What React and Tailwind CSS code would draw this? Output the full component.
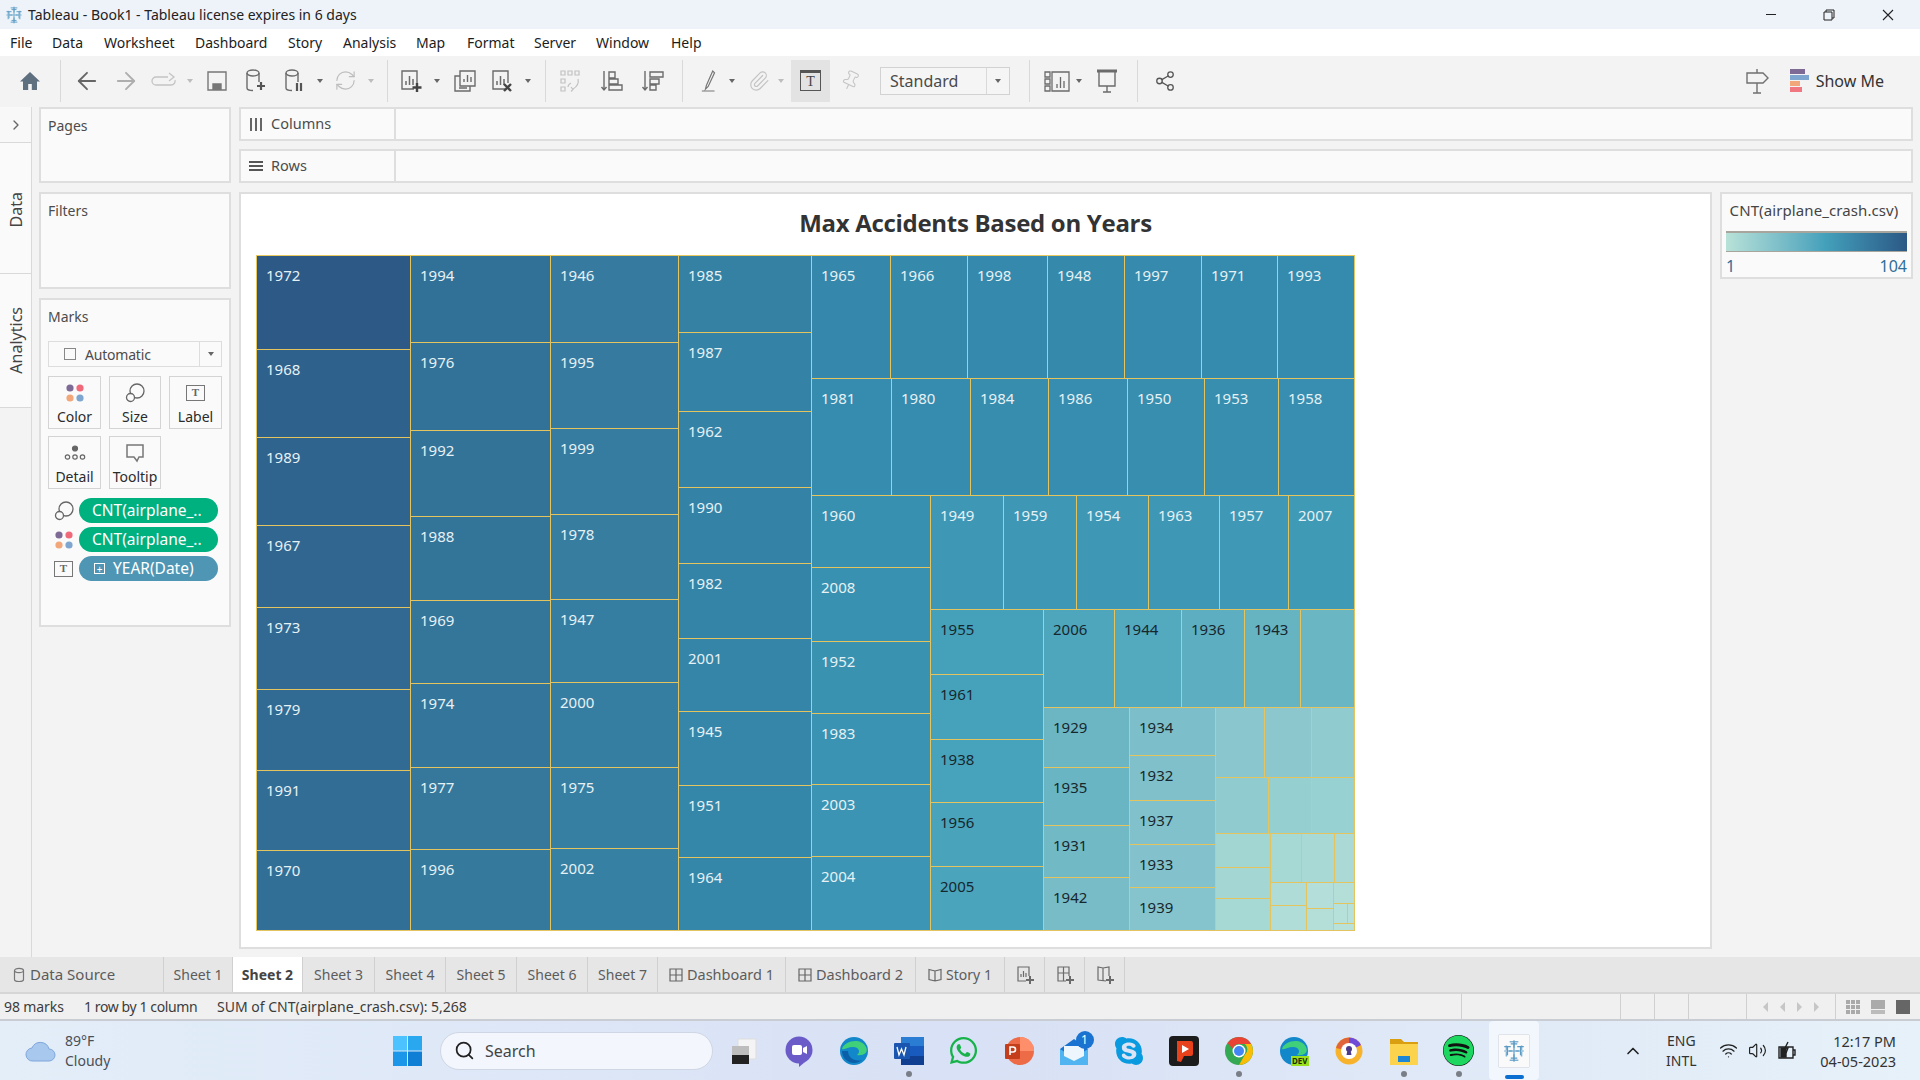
import React from 'react';
import { ArrowLeft, ArrowRight, RefreshCw, Paperclip, Pin, Share2, Wifi, Volume2, ChevronUp, Search, ChevronRight } from 'lucide-react';
import { FaWhatsapp, FaSkype, FaSpotify } from 'react-icons/fa';

const UI = "font-['Noto_Sans','Open_Sans',sans-serif]";
const LINE = 'border-r border-b border-[#e3c45e]';

// cell: [label, classes, dark text?]
const Cell = ({ year, className, dark }) => (
  <div className={`${LINE} ${className} overflow-hidden ${year ? 'pl-[9px] pt-[8px]' : ''} text-[15px] leading-[22px] ${dark ? 'text-[#17272e]' : 'text-[#e6f1f5]'}`}>{year}</div>
);

const Col = ({ className, cells, dark }) => (
  <div className={`flex flex-col ${className}`}>
    {cells.map(([year, c]) => <Cell key={year + c} year={year} className={c} dark={dark} />)}
  </div>
);

const Row = ({ className, cells, dark }) => (
  <div className={`flex ${className}`}>
    {cells.map(([year, c]) => <Cell key={year + c} year={year} className={c} dark={dark} />)}
  </div>
);

const Treemap = () => (
  <div className="flex w-[1099px] h-[676px] border-t border-l border-[#e9c95f]">
    <Col className="w-[154px]" cells={[
      ['1972', 'h-[94px] bg-[#2c5986]'], ['1968', 'h-[88px] bg-[#2e618c]'], ['1989', 'h-[88px] bg-[#2f648e]'], ['1967', 'h-[82px] bg-[#306690]'],
      ['1973', 'h-[82px] bg-[#316992]'], ['1979', 'h-[81px] bg-[#316b93]'], ['1991', 'h-[80px] bg-[#326d95]'], ['1970', 'flex-1 bg-[#326f96]'],
    ]} />
    <Col className="w-[140px]" cells={[
      ['1994', 'h-[87px] bg-[#327197]'], ['1976', 'h-[88px] bg-[#327298]'], ['1992', 'h-[86px] bg-[#337398]'], ['1988', 'h-[84px] bg-[#337499]'],
      ['1969', 'h-[83px] bg-[#34759a]'], ['1974', 'h-[84px] bg-[#34769b]'], ['1977', 'h-[82px] bg-[#35789c]'], ['1996', 'flex-1 bg-[#35799d]'],
    ]} />
    <Col className="w-[128px]" cells={[
      ['1946', 'h-[87px] bg-[#367b9f]'], ['1995', 'h-[86px] bg-[#367b9f]'], ['1999', 'h-[86px] bg-[#367ca0]'], ['1978', 'h-[85px] bg-[#367da0]'],
      ['1947', 'h-[83px] bg-[#367ea1]'], ['2000', 'h-[85px] bg-[#367ea1]'], ['1975', 'h-[81px] bg-[#367fa2]'], ['2002', 'flex-1 bg-[#3680a3]'],
    ]} />
    <Col className="w-[133px]" cells={[
      ['1985', 'h-[77px] bg-[#3481a4]'], ['1987', 'h-[79px] bg-[#3482a5]'], ['1962', 'h-[76px] bg-[#3483a6]'], ['1990', 'h-[76px] bg-[#3483a6]'],
      ['1982', 'h-[75px] bg-[#3484a7]'], ['2001', 'h-[73px] bg-[#3485a8]'], ['1945', 'h-[74px] bg-[#3586a9]'], ['1951', 'h-[72px] bg-[#3587a9]'], ['1964', 'flex-1 bg-[#3587aa]'],
    ]} />
    <div className="flex flex-col flex-1">
      <Row className="h-[123px]" cells={[
        ['1965', 'w-[79px] bg-[#3588ab]'], ['1966', 'w-[77px] bg-[#3589ab]'], ['1998', 'w-[80px] bg-[#3589ac]'], ['1948', 'w-[77px] bg-[#358aac]'],
        ['1997', 'w-[77px] bg-[#358aad]'], ['1971', 'w-[76px] bg-[#358bad]'], ['1993', 'flex-1 bg-[#358bad]'],
      ]} />
      <Row className="h-[117px]" cells={[
        ['1981', 'w-[80px] bg-[#368cae]'], ['1980', 'w-[79px] bg-[#368cae]'], ['1984', 'w-[78px] bg-[#368dae]'], ['1986', 'w-[79px] bg-[#378daf]'],
        ['1950', 'w-[77px] bg-[#378eaf]'], ['1953', 'w-[74px] bg-[#378eaf]'], ['1958', 'flex-1 bg-[#378eb0]'],
      ]} />
      <div className="flex flex-1">
        <Col className="w-[119px]" cells={[
          ['1960', 'h-[72px] bg-[#3890b1]'], ['2008', 'h-[74px] bg-[#3991b1]'], ['1952', 'h-[72px] bg-[#3a92b1]'], ['1983', 'h-[71px] bg-[#3a93b2]'],
          ['2003', 'h-[72px] bg-[#3b94b3]'], ['2004', 'flex-1 bg-[#3c95b4]'],
        ]} />
        <div className="flex flex-col flex-1">
          <Row className="h-[114px]" cells={[
            ['1949', 'w-[73px] bg-[#3d97b5]'], ['1959', 'w-[73px] bg-[#3d97b5]'], ['1954', 'w-[72px] bg-[#3e98b5]'], ['1963', 'w-[71px] bg-[#3e98b5]'],
            ['1957', 'w-[69px] bg-[#3f99b6]'], ['2007', 'flex-1 bg-[#3f9ab6]'],
          ]} />
          <div className="flex flex-1">
            <Col className="w-[113px]" dark cells={[
              ['1955', 'h-[65px] bg-[#45a1ba]'], ['1961', 'h-[65px] bg-[#46a2ba]'], ['1938', 'h-[63px] bg-[#47a3bb]'], ['1956', 'h-[64px] bg-[#48a3bb]'], ['2005', 'flex-1 bg-[#49a4bc]'],
            ]} />
            <div className="flex flex-col flex-1">
              <Row className="h-[98px]" dark cells={[
                ['2006', 'w-[71px] bg-[#4ea6bc]'], ['1944', 'w-[67px] bg-[#53a9be]'], ['1936', 'w-[63px] bg-[#5eaec1]'], ['1943', 'w-[56px] bg-[#66b3c2]'], ['', 'flex-1 bg-[#6bb6c3]'],
              ]} />
              <div className="flex flex-1">
                <Col className="w-[86px]" dark cells={[
                  ['1929', 'h-[60px] bg-[#6cb6c4]'], ['1935', 'h-[58px] bg-[#69b5c3]'], ['1931', 'h-[52px] bg-[#72b9c6]'], ['1942', 'flex-1 bg-[#78bcc8]'],
                ]} />
                <Col className="w-[86px]" dark cells={[
                  ['1934', 'h-[48px] bg-[#7cbfca]'], ['1932', 'h-[45px] bg-[#7fc0ca]'], ['1937', 'h-[44px] bg-[#81c1cb]'], ['1933', 'h-[43px] bg-[#83c2cc]'], ['1939', 'flex-1 bg-[#85c4cd]'],
                ]} />
                <div className="flex flex-col flex-1">
                  <Row className="h-[70px]" cells={[['', 'w-[49px] bg-[#8ac6cd]'], ['', 'w-[47px] bg-[#8cc7ce]'], ['', 'flex-1 bg-[#90cbcf]']]} />
                  <Row className="h-[56px]" cells={[['', 'w-[53px] bg-[#90cbcf]'], ['', 'w-[43px] bg-[#96cfd0]'], ['', 'flex-1 bg-[#98d1d1]']]} />
                  <div className="flex flex-1">
                    <Col className="w-[55px]" cells={[['', 'h-[34px] bg-[#a2d6d2]'], ['', 'h-[31px] bg-[#a4d7d3]'], ['', 'flex-1 bg-[#a6d8d4]']]} />
                    <div className="flex flex-col flex-1">
                      <Row className="h-[49px]" cells={[['', 'w-[31px] bg-[#a6d8d4]'], ['', 'w-[33px] bg-[#a8d9d5]'], ['', 'flex-1 bg-[#abdad6]']]} />
                      <div className="flex flex-1">
                        <Col className="w-[36px]" cells={[['', 'h-[23px] bg-[#b0dcd7]'], ['', 'flex-1 bg-[#b1ddd8]']]} />
                        <Col className="w-[27px]" cells={[['', 'h-[26px] bg-[#b3ded9]'], ['', 'flex-1 bg-[#b4dfd9]']]} />
                        <div className="flex flex-col flex-1">
                          <Cell year="" className="h-[21px] bg-[#b4dfd9]" />
                          <div className="flex h-[20px]">
                            <Cell year="" className="w-[14px] bg-[#b6e0da]" />
                            <Cell year="" className="flex-1 bg-[#b7e0da]" />
                          </div>
                          <Cell year="" className="flex-1 bg-[#b8e1da]" />
                        </div>
                      </div>
                    </div>
                  </div>
                </div>
              </div>
            </div>
          </div>
        </div>
      </div>
    </div>
  </div>
);

const TableauLogo = ({ size = 20 }) => (
  <svg width={size} height={size} viewBox="0 0 24 24" stroke="#5b9bc4" strokeWidth="1.4">
    <path d="M12 3v18M7.5 12h9M12 3M8 3.5h8M5 7v4M19 7v4M5 13v4M19 13v4M8 20.5h8" stroke="#7fb2d2" />
    <path d="M12 2v7M9 5.5h6M12 15v7M9 18.5h6M3 12h7M14 12h7M6 8v8M18 8v8M3 8h6M15 8h6" strokeWidth="1.1" />
  </svg>
);

const Caret = ({ className = '', light }) => (
  <div className={`w-[10px] flex justify-center ${className}`}>
    <div className={`w-0 h-0 border-l-[3px] border-r-[3px] border-t-[4px] border-l-transparent border-r-transparent ${light ? 'border-t-[#bdbdbd]' : 'border-t-[#666666]'}`} />
  </div>
);

const Sep = ({ className }) => <div className={`w-px h-[42px] bg-[#d9d9d9] ${className}`} />;

const Box = ({ className, children }) => <div className={`w-[30px] flex items-center justify-center ${className}`}>{children}</div>;

const Sheet = ({ children }) => (
  <svg width="26" height="26" viewBox="0 0 26 26" fill="none" stroke="#6b6b6b" strokeWidth="1.4">
    <path d="M16 21H4V3h15v12" />
    <path d="M8 17v-4M11.5 17V8M15 17v-6" strokeWidth="1.5" />
    {children}
  </svg>
);

const Toolbar = () => (
  <div className="flex items-center h-[51px] bg-[#f3f3f3] pr-[36px] pb-[2px]">
    <div className="w-[60px] flex justify-center">
      <svg width="24" height="24" viewBox="0 0 24 24" fill="#5e6f80"><path d="M12 3 2 12.5h3V21h5.2v-6h3.6v6H19v-8.5h3z" /></svg>
    </div>
    <Sep />
    <Box className="ml-[11px]"><ArrowLeft size={28} strokeWidth={1.6} color="#666666" /></Box>
    <Box className="ml-[9px]"><ArrowRight size={28} strokeWidth={1.6} color="#aeaeae" /></Box>
    <Box className="ml-[9px]">
      <svg width="28" height="20" viewBox="0 0 28 20" fill="none" stroke="#c4c4c4" strokeWidth="1.3"><path d="M17 6H5a4 4 0 0 0 0 8h15a4 4 0 0 0 4-5" /><path d="m18 2 5 4-5 4" /></svg>
    </Box>
    <Caret light className="ml-[5px]" />
    <Box className="ml-[7px]">
      <svg width="22" height="24" viewBox="0 0 22 24" fill="none" stroke="#777777" strokeWidth="1.4"><path d="M2 3h18v18H2z" /><path d="M7 21v-6h8v6" fill="#777777" /></svg>
    </Box>
    <Box className="ml-[9px]">
      <svg width="24" height="26" viewBox="0 0 24 26" fill="none" stroke="#6b6b6b" strokeWidth="1.4"><ellipse cx="9" cy="5" rx="6" ry="3" /><path d="M3 5v15c0 1.5 3 2.5 6 2.5M15 5v9" /><path d="M17 14v8M13 18h8" strokeWidth="2.2" stroke="#555555" /></svg>
    </Box>
    <Box className="ml-[9px]">
      <svg width="24" height="26" viewBox="0 0 24 26" fill="none" stroke="#6b6b6b" strokeWidth="1.4"><ellipse cx="9" cy="5" rx="6" ry="3" /><path d="M3 5v15c0 1.5 3 2.5 6 2.5M15 5v9" /><path d="M14 15v8M18 15v8" strokeWidth="2.2" stroke="#555555" /></svg>
    </Box>
    <Caret className="ml-[5px]" />
    <Box className="ml-[5px]"><RefreshCw size={23} strokeWidth={1.2} color="#bdbdbd" /></Box>
    <Caret light className="ml-[6px]" />
    <Sep className="ml-[11px]" />
    <Box className="ml-[8px]"><Sheet><path d="M19 15v9M14.5 19.5h9" strokeWidth="2.4" stroke="#444444" /></Sheet></Box>
    <Caret className="ml-[6px]" />
    <Box className="ml-[8px]">
      <svg width="26" height="26" viewBox="0 0 26 26" fill="none" stroke="#6b6b6b" strokeWidth="1.4"><path d="M8 3h15v15H8zM8 8H3v15h15v-5" /><path d="M12 14v-3M15.500 14V7M19 14V9M7 20h8" /></svg>
    </Box>
    <Box className="ml-[7px]"><Sheet><path d="m15 16 7 7M22 16l-7 7" strokeWidth="2.4" stroke="#444444" /></Sheet></Box>
    <Caret className="ml-[6px]" />
    <Sep className="ml-[12px]" />
    <Box className="ml-[10px]">
      <svg width="24" height="24" viewBox="0 0 24 24" fill="none" stroke="#c2c2c2" strokeWidth="1.2"><path d="M2 2h4v4H2zM9 2h4v4H9zM16 2h4v4h-4zM2 10h4v4H2zM2 18h4v4H2zM19 10c1 4 0 7-5 10M12 18l2 2.500-2 2M9 18c0-1 1-3 3-4" /></svg>
    </Box>
    <Box className="ml-[11px]">
      <svg width="24" height="24" viewBox="0 0 24 24" fill="none" stroke="#6b6b6b" strokeWidth="1.4"><path d="M4 2v19M1.500 18 4 21l2.500-3" /><path d="M9 3h6v6H9zM9 10h9v5H9zM9 16h13v5H9z" /></svg>
    </Box>
    <Box className="ml-[11px]">
      <svg width="24" height="24" viewBox="0 0 24 24" fill="none" stroke="#6b6b6b" strokeWidth="1.4"><path d="M4 2v19M1.500 18 4 21l2.500-3" /><path d="M9 3h13v5H9zM9 10h9v5H9zM9 16h6v5H9z" /></svg>
    </Box>
    <Sep className="ml-[14px]" />
    <Box className="ml-[12px]">
      <svg width="20" height="24" viewBox="0 0 22 26" fill="none" stroke="#777777" strokeWidth="1.3"><path d="M14 2 7 18l-1 4 3-3 7-15zM2 24h14" /></svg>
    </Box>
    <Caret className="ml-[2px]" />
    <Box className="ml-[7px]"><Paperclip size={22} strokeWidth={1.3} color="#c4c4c4" /></Box>
    <Caret light className="ml-[2px]" />
    <div className="ml-[5px] w-[39px] h-[42px] bg-[#e3e3e3] flex items-center justify-center">
      <div className="w-[21px] h-[21px] border-[1.500px] border-t-[3px] border-[#555555] flex items-center justify-center font-['Liberation_Serif',serif] text-[14px] text-[#444444]">T</div>
    </div>
    <Box className="ml-[5px]"><Pin size={21} strokeWidth={1.2} color="#c4c4c4" className="rotate-[25deg]" /></Box>
    <div className={`ml-[15px] w-[130px] h-[28px] border border-[#d2d2d2] flex items-center bg-[#f5f5f5] ${UI}`}>
      <div className="flex-1 pl-[9px] text-[16px] text-[#4a4a4a] leading-none">Standard</div>
      <div className="w-[23px] h-full border-l border-[#d9d9d9] flex items-center justify-center"><Caret /></div>
    </div>
    <Sep className="ml-[19px]" />
    <Box className="ml-[12px]">
      <svg width="26" height="24" viewBox="0 0 26 24" fill="none" stroke="#6b6b6b" strokeWidth="1.3"><path d="M1 3h5v5H1zM1 10h5v5H1zM1 17h5v5H1zM8 3h17v19H8z" /><path d="M13 19v-4M16.500 19V8M20 19v-7" /></svg>
    </Box>
    <Caret className="ml-[2px]" />
    <Box className="ml-[8px]">
      <svg width="24" height="26" viewBox="0 0 24 26" fill="none" stroke="#6b6b6b" strokeWidth="1.4"><path d="M2 3h20" strokeWidth="3" /><path d="M4 4v14h16V4M12 18v6M8 24h8" /></svg>
    </Box>
    <Sep className="ml-[15px]" />
    <Box className="ml-[12px]"><Share2 size={22} strokeWidth={1.4} color="#555555" /></Box>
    <div className="ml-auto flex items-center">
      <svg width="26" height="28" viewBox="0 0 26 28" fill="none" stroke="#707070" strokeWidth="1.4"><path d="M3 6h16l5 5-5 5H3zM13 2v4M13 16v10M9 26h8" /></svg>
      <div className="ml-[20px] w-[19px] flex flex-col gap-px">
        <div className="w-[15px] h-[5px] bg-[#7d6a95]" />
        <div className="w-[19px] h-[5px] bg-[#7ea6cf]" />
        <div className="w-[10px] h-[5px] bg-[#f2a77a]" />
        <div className="w-[12px] h-[5px] bg-[#f0767f]" />
      </div>
      <div className={`ml-[7px] text-[16px] text-[#333333] ${UI}`}>Show Me</div>
    </div>
  </div>
);

const MarkBtn = ({ label, children, className }) => (
  <div className={`h-[53px] border-[1.500px] border-[#d4d4d4] bg-[#fafafa] flex flex-col items-center ${className}`}>
    <div className="h-[29px] mt-[1px] flex items-center justify-center">{children}</div>
    <div className="text-[14px] leading-[20px] text-[#2b2b2b]">{label}</div>
  </div>
);

const ColorDots = () => (
  <svg width="20" height="20" viewBox="0 0 20 20"><circle cx="5" cy="5" r="3.600" fill="#7d6a95" /><circle cx="15" cy="5" r="3.600" fill="#f0697a" /><circle cx="5" cy="15" r="3.600" fill="#f2a77a" /><circle cx="15" cy="15" r="3.600" fill="#7ea6cf" /></svg>
);
const SizeIcon = () => (
  <svg width="20" height="20" viewBox="0 0 20 20" fill="none" stroke="#666666" strokeWidth="1.300"><circle cx="12" cy="8" r="7" /><circle cx="5.500" cy="14.500" r="4" fill="#fafafa" /></svg>
);
const LabelIcon = () => (
  <div className="w-[19px] h-[16px] border-[1.500px] border-[#777777] flex items-center justify-center font-['Liberation_Serif',serif] text-[11px] font-bold text-[#666666] leading-none">T</div>
);

const Pill = ({ className, children }) => (
  <div className={`w-[139px] h-[25px] rounded-full text-white text-[15.500px] flex items-center whitespace-nowrap ${className}`}>{children}</div>
);

const LeftPanels = () => (
  <div className={`w-[192px] flex flex-col gap-[9px] ${UI}`}>
    <div className="h-[76px] border-2 border-[#dedede] bg-[#fafafa] pl-[7px] pt-[6px] text-[14px] text-[#4c4c4c]">Pages</div>
    <div className="h-[97px] border-2 border-[#dedede] bg-[#fafafa] pl-[7px] pt-[6px] text-[14px] text-[#4c4c4c]">Filters</div>
    <div className="h-[329px] border-2 border-[#dedede] bg-[#fafafa] pl-[7px] pr-[7px] pt-[6px]">
      <div className="text-[14px] text-[#4c4c4c]">Marks</div>
      <div className="mt-[14px] h-[26px] border-[1.500px] border-[#dddddd] flex items-center">
        <div className="flex-1 flex items-center pl-[15px] text-[14px] text-[#4c4c4c] tracking-[-0.2px]">
          <div className="w-[12px] h-[12px] border border-[#888888] mr-[9px]" />
          Automatic
        </div>
        <div className="w-[22px] h-full border-l border-[#dddddd] flex items-center justify-center"><Caret /></div>
      </div>
      <div className="mt-[9px] flex gap-[8px]">
        <MarkBtn label="Color" className="w-[53px]"><ColorDots /></MarkBtn>
        <MarkBtn label="Size" className="w-[52px]"><SizeIcon /></MarkBtn>
        <MarkBtn label="Label" className="w-[53px]"><LabelIcon /></MarkBtn>
      </div>
      <div className="mt-[7px] flex gap-[8px]">
        <MarkBtn label="Detail" className="w-[53px]">
          <svg width="22" height="16" viewBox="0 0 22 16" fill="none" stroke="#666666" strokeWidth="1.200"><circle cx="11" cy="3.500" r="2.500" fill="#666666" /><circle cx="3.500" cy="12" r="2.200" /><circle cx="11" cy="12" r="2.200" /><circle cx="18.500" cy="12" r="2.200" /></svg>
        </MarkBtn>
        <MarkBtn label="Tooltip" className="w-[52px]">
          <svg width="20" height="20" viewBox="0 0 20 20" fill="none" stroke="#777777" strokeWidth="1.500"><path d="M2 2h16v12h-4l-2 4-3-4H2z" /></svg>
        </MarkBtn>
      </div>
      <div className="mt-[9px] flex flex-col gap-[4px]">
        <div className="flex items-center"><div className="w-[31px] flex justify-center"><SizeIcon /></div><Pill className="bg-[#00b180] pl-[13px]">CNT(airplane_..</Pill></div>
        <div className="flex items-center"><div className="w-[31px] flex justify-center"><ColorDots /></div><Pill className="bg-[#00b180] pl-[13px]">CNT(airplane_..</Pill></div>
        <div className="flex items-center"><div className="w-[31px] flex justify-center"><LabelIcon /></div>
          <Pill className="bg-[#4f96b5] pl-[15px]">
            <div className="w-[11px] h-[11px] border border-white mr-[8px] flex items-center justify-center text-[10px] leading-none">+</div>
            YEAR(Date)
          </Pill>
        </div>
      </div>
    </div>
  </div>
);

const Shelf = ({ label, icon }) => (
  <div className="h-[34px] flex border-2 border-[#dedede] bg-[#fafafa]">
    <div className={`w-[155px] border-r-2 border-[#dedede] flex items-center pl-[6px] text-[14.500px] text-[#4c4c4c] ${UI}`}>
      <div className="w-[18px] mr-[6px] flex justify-center">{icon}</div>{label}
    </div>
  </div>
);

const Tab = ({ label, active, className, icon }) => (
  <div className={`h-full flex items-center justify-center border-r border-[#d0d0d0] ${active ? 'bg-white font-bold text-[#444444]' : 'text-[#5c5c5c]'} ${className}`}>
    {icon}{label}
  </div>
);

const GridGlyph = () => (
  <svg width="14" height="14" viewBox="0 0 14 14" fill="none" stroke="#666666" strokeWidth="1.200" className="mr-[4px]"><path d="M1 1h12v12H1zM7 1v12M1 7h12" /></svg>
);

const NewTab = ({ children }) => (
  <div className="w-[40px] h-full border-r border-[#d0d0d0] flex items-center justify-center">{children}</div>
);

const TabBar = () => (
  <div className={`h-[37px] bg-[#e6e6e6] border-b-2 border-[#d6d6d6] flex text-[14px] ${UI}`}>
    <Tab label="Data Source" className="w-[164px] !justify-start pl-[13px] text-[15px]" icon={
      <svg width="12" height="16" viewBox="0 0 12 16" fill="none" stroke="#777777" strokeWidth="1.200" className="mr-[5px]"><ellipse cx="6" cy="3.500" rx="4.500" ry="2.200" /><path d="M1.500 3.500v9c0 1 2 2 4.500 2s4.500-1 4.500-2v-9" /></svg>
    } />
    <Tab label="Sheet 1" className="w-[69px]" />
    <Tab label="Sheet 2" active className="w-[70px]" />
    <Tab label="Sheet 3" className="w-[72px]" />
    <Tab label="Sheet 4" className="w-[71px]" />
    <Tab label="Sheet 5" className="w-[71px]" />
    <Tab label="Sheet 6" className="w-[71px]" />
    <Tab label="Sheet 7" className="w-[70px]" />
    <Tab label="Dashboard 1" className="w-[128px] text-[14.500px]" icon={<GridGlyph />} />
    <Tab label="Dashboard 2" className="w-[130px] text-[14.500px]" icon={<GridGlyph />} />
    <Tab label="Story 1" className="w-[89px]" icon={
      <svg width="14" height="14" viewBox="0 0 14 14" fill="none" stroke="#666666" strokeWidth="1.200" className="mr-[4px]"><path d="M1 1.500 7 3l6-1.500v10L7 13l-6-1.500zM7 3v10" /></svg>
    } />
    <NewTab><svg width="20" height="20" viewBox="0 0 20 20" fill="none" stroke="#6b6b6b" strokeWidth="1.200"><path d="M11 16H3V2h11v9M6 12V9M8.500 12V6M11 12V8" /><path d="M15 11v8M11 15h8" strokeWidth="2" /></svg></NewTab>
    <NewTab><svg width="20" height="20" viewBox="0 0 20 20" fill="none" stroke="#6b6b6b" strokeWidth="1.200"><path d="M11 16H3V2h11v9M3 8h11M8.500 2v14" /><path d="M15 11v8M11 15h8" strokeWidth="2" /></svg></NewTab>
    <NewTab><svg width="20" height="20" viewBox="0 0 20 20" fill="none" stroke="#6b6b6b" strokeWidth="1.200"><path d="M11 16l-8-1V2l5 1 6-1v9M8 3v13" /><path d="M15 11v8M11 15h8" strokeWidth="2" /></svg></NewTab>
  </div>
);

const StatusCell = ({ className, children }) => <div className={`h-full border-r border-[#d0d0d0] flex items-center justify-center ${className}`}>{children}</div>;

const StatusBar = () => (
  <div className={`h-[27px] bg-[#f0f0f0] border-b-2 border-[#c9ccd2] flex items-center text-[14px] text-[#3c3c3c] ${UI}`}>
    <div className="pl-[4px] w-[84px] tracking-[-0.1px]">98 marks</div>
    <div className="w-[133px] tracking-[-0.4px]">1 row by 1 column</div>
    <div className="w-[1245px] border-r border-[#d0d0d0] h-full flex items-center">SUM of CNT(airplane_crash.csv): 5,268</div>
    <StatusCell className="w-[159px]" />
    <StatusCell className="w-[34px]" />
    <StatusCell className="w-[34px]" />
    <StatusCell className="w-[58px]" />
    <StatusCell className="w-[89px] gap-[12px]">
      <div className="w-0 h-0 border-y-[5px] border-r-[5px] border-y-transparent border-r-[#c6c6c6]" />
      <div className="w-0 h-0 border-y-[5px] border-r-[5px] border-y-transparent border-r-[#c6c6c6]" />
      <div className="w-0 h-0 border-y-[5px] border-l-[5px] border-y-transparent border-l-[#c6c6c6]" />
      <div className="w-0 h-0 border-y-[5px] border-l-[5px] border-y-transparent border-l-[#c6c6c6]" />
    </StatusCell>
    <div className="flex-1 flex items-center justify-around px-[4px]">
      <div className="w-[14px] h-[14px] grid grid-cols-3 gap-px">{Array.from({ length: 9 }, (_, i) => <div key={i} className="bg-[#aaaaaa]" />)}</div>
      <div className="w-[14px] h-[14px] flex flex-col gap-px"><div className="h-[9px] bg-[#aaaaaa]" /><div className="h-[4px] bg-[#bbbbbb]" /></div>
      <div className="w-[14px] h-[14px] bg-[#666666]" />
    </div>
  </div>
);

const TaskIcon = ({ children, dot, className = '' }) => (
  <div className={`relative w-[55px] h-[59px] flex items-center justify-center ${className}`}>
    {children}
    {dot && <div className="absolute bottom-[3px] w-[6px] h-[6px] rounded-full bg-[#7a7f87]" />}
  </div>
);

const Taskbar = () => (
  <div className={`h-[59px] flex items-center bg-gradient-to-r from-[#e3eef9] via-[#d8e1f5] to-[#e6f1f9] ${UI}`}>
    <div className="w-[393px] flex items-center pl-[25px]">
      <svg width="32" height="24" viewBox="0 0 32 24"><path d="M8 22a6.500 6.500 0 0 1-1-13 9 9 0 0 1 17 1 6 6 0 0 1 0 12z" fill="#a9c8ee" stroke="#7ea6db" /></svg>
      <div className="ml-[8px] text-[14px] leading-[20px] text-[#4a4f57]">
        <div>89°F</div>
        <div>Cloudy</div>
      </div>
    </div>
    <svg width="29" height="30" viewBox="0 0 29 30"><path d="M0 0h14v14.500H0z" fill="#4cc2ff" /><path d="M15 0h14v14.500H15z" fill="#29a8f0" /><path d="M0 15.500h14V30H0z" fill="#1c96e8" /><path d="M15 15.500h14V30H15z" fill="#0f7fd6" /></svg>
    <div className="ml-[18px] w-[273px] h-[38px] rounded-full bg-[#f3f6fd] border border-[#cfd6e4] flex items-center pl-[13px] text-[16px] text-[#444444]">
      <Search size={21} strokeWidth={2} color="#222222" />
      <span className="ml-[10px]">Search</span>
    </div>
    <div className="ml-[3px] flex items-center">
      <TaskIcon>
        <svg width="30" height="30" viewBox="0 0 30 30"><path d="M9 3h18v20H9z" fill="#f4f4f4" stroke="#dddddd" /><path d="M3 10h17v18H3z" fill="#bdbdbd" /><path d="M3 19h17v9H3z" fill="#222222" /></svg>
      </TaskIcon>
      <TaskIcon>
        <svg width="30" height="32" viewBox="0 0 30 32"><circle cx="15" cy="15" r="13.500" fill="#6a5bc9" /><path d="M15 28v4l6-5z" fill="#6a5bc9" /><rect x="8" y="10" width="10" height="10" rx="2" fill="#fff" /><path d="m19 13 4-2v8l-4-2z" fill="#fff" /></svg>
      </TaskIcon>
      <TaskIcon>
        <svg width="30" height="30" viewBox="0 0 30 30"><circle cx="15" cy="15" r="14" fill="#1287c9" /><path d="M3 13C5 5 22 1 27 11c3 6-3 9-9 8 4-3 2-8-4-8-5 0-8 3-11 2z" fill="#41d07a" /><path d="M9 15c0 7 7 11 14 9-8 7-20 1-20-9z" fill="#0b5fa8" /></svg>
      </TaskIcon>
      <TaskIcon dot>
        <svg width="32" height="30" viewBox="0 0 32 30"><path d="M8 1h23v28H8z" fill="#2b7cd3" /><path d="M8 10h23v10H8z" fill="#185abd" /><path d="M8 20h23v9H8z" fill="#103f91" /><rect x="1" y="7" width="16" height="16" rx="1" fill="#1a55b0" /><path d="m4 11 2 8 2.500-6 2.500 6 2-8" fill="none" stroke="#fff" strokeWidth="1.300" /></svg>
      </TaskIcon>
      <TaskIcon><FaWhatsapp size={31} color="#17b34a" /></TaskIcon>
      <TaskIcon>
        <svg width="32" height="30" viewBox="0 0 32 30"><circle cx="17" cy="15" r="14" fill="#ed6c47" /><path d="M17 1a14 14 0 0 1 14 14H17z" fill="#ff8f6b" /><rect x="2" y="8" width="15" height="15" rx="1" fill="#c43e1c" /><path d="M7 19v-8h3a2.500 2.500 0 0 1 0 5H7" fill="none" stroke="#fff" strokeWidth="1.600" /></svg>
      </TaskIcon>
      <TaskIcon>
        <div className="relative">
          <svg width="30" height="30" viewBox="0 0 30 30"><path d="M1 13 15 3l14 10v16H1z" fill="#1a73d0" /><path d="M1 13l14 9 14-9v16H1z" fill="#4fb4ef" /><path d="M5 10h20v10l-10 5-10-5z" fill="#eef6fd" /></svg>
          <div className="absolute -top-[5px] -right-[5px] w-[18px] h-[18px] rounded-full bg-[#1a73d0] text-white text-[12px] leading-[18px] text-center">1</div>
        </div>
      </TaskIcon>
      <TaskIcon><FaSkype size={32} color="#0a9adf" /></TaskIcon>
      <TaskIcon>
        <svg width="30" height="30" viewBox="0 0 30 30"><rect width="30" height="30" rx="4" fill="#1c1c1c" /><path d="M8 5h14a2 2 0 0 1 2 2v11a2 2 0 0 1-2 2h-7l-3 6-4-1z" fill="#e8421d" /><path d="m13 9 7 4-7 4z" fill="#fff" /></svg>
      </TaskIcon>
      <TaskIcon dot>
        <svg width="30" height="30" viewBox="0 0 30 30"><circle cx="15" cy="15" r="14" fill="#34a853" /><path d="M15 1a14 14 0 0 1 12.100 7H15a7 7 0 0 0-6.500 4.500L3.500 7A14 14 0 0 1 15 1z" fill="#ea4335" /><path d="M27.100 8A14 14 0 0 1 15 29l6-10.500A7 7 0 0 0 21 8z" fill="#fbbc05" /><circle cx="15" cy="15" r="6.500" fill="#fff" /><circle cx="15" cy="15" r="5" fill="#4285f4" /></svg>
      </TaskIcon>
      <TaskIcon>
        <div className="relative">
          <svg width="30" height="30" viewBox="0 0 30 30"><circle cx="15" cy="15" r="14" fill="#1287c9" /><path d="M3 13C5 5 22 1 27 11c3 6-3 9-9 8 4-3 2-8-4-8-5 0-8 3-11 2z" fill="#41d07a" /></svg>
          <div className="absolute bottom-0 right-0 bg-[#9be01e] text-[#1c2a00] text-[8px] font-bold px-px leading-[10px]">DEV</div>
        </div>
      </TaskIcon>
      <TaskIcon>
        <svg width="28" height="30" viewBox="0 0 28 30"><circle cx="14" cy="15" r="13.500" fill="#f7b32b" /><path d="M14 1.500a13.500 13.500 0 0 1 12 7.500L14 15z" fill="#6f4bd8" /><path d="M1 12A13.500 13.500 0 0 1 14 1.500V15z" fill="#e0653a" /><circle cx="14" cy="15" r="8" fill="#fff" /><circle cx="14" cy="13" r="3" fill="#4a3a8c" /><path d="M12.500 14h3l1 5h-5z" fill="#4a3a8c" /></svg>
      </TaskIcon>
      <TaskIcon dot>
        <svg width="30" height="30" viewBox="0 0 30 30"><path d="M1 3h11l3 3h14v22H1z" fill="#d99f10" /><path d="M1 8h28v21H1z" fill="#fcd34d" /><rect x="9" y="20" width="12" height="6" fill="#1b87d6" /></svg>
      </TaskIcon>
      <TaskIcon dot><FaSpotify size={31} color="#1ed760" className="bg-[#111111] rounded-full" /></TaskIcon>
      <div className="relative w-[50px] h-[59px] ml-[3px] bg-[#f2f6fd] rounded-[4px] flex items-center justify-center">
        <div className="w-[30px] h-[32px] bg-[#fafafa] shadow-[0_0_1px_#888888] flex items-center justify-center"><TableauLogo size={26} /></div>
        <div className="absolute bottom-[1px] w-[19px] h-[4px] rounded-full bg-[#0a6fd1]" />
      </div>
    </div>
    <div className="ml-auto flex items-center pr-[24px] text-[#333333]">
      <ChevronUp size={20} strokeWidth={2} color="#222222" />
      <div className="ml-[18px] w-[40px] text-center text-[14px] leading-[20px]"><div>ENG</div><div>INTL</div></div>
      <Wifi size={19} strokeWidth={1.6} color="#222222" className="ml-[18px]" />
      <Volume2 size={19} strokeWidth={1.5} color="#222222" className="ml-[10px]" />
      <svg width="22" height="20" viewBox="0 0 22 20" fill="none" stroke="#222222" strokeWidth="1.400" className="ml-[9px]"><path d="M3 6h14v11H3zM17 9h2v5h-2" /><path d="M5 7h5v9H5z" fill="#222222" /><path d="m12 1-3 6h3l-2 5" /></svg>
      <div className="ml-[22px] text-right text-[14.500px] leading-[20px]"><div>12:17 PM</div><div>04-05-2023</div></div>
    </div>
  </div>
);

export default function App() {
  return (
    <div className={`w-[1920px] h-[1080px] overflow-hidden flex flex-col bg-[#f3f3f3] ${UI}`}>
      <div className="h-[29px] bg-[#eef3fa] flex items-center">
        <div className="w-[28px] flex justify-center"><TableauLogo /></div>
        <div className="text-[14px] text-[#222222]">Tableau - Book1 - Tableau license expires in 6 days</div>
        <div className="ml-auto flex h-full items-center text-[#222222]">
          <div className="w-[58px] flex justify-center"><div className="w-[10px] h-px bg-[#222222]" /></div>
          <div className="w-[58px] flex justify-center">
            <svg width="12" height="12" viewBox="0 0 12 12" fill="none" stroke="#222222"><path d="M1 3h8v8H1zM3 3V1h8v8H9" /></svg>
          </div>
          <div className="w-[62px] flex justify-center pr-[2px]">
            <svg width="12" height="12" viewBox="0 0 12 12" fill="none" stroke="#222222" strokeWidth="1.100"><path d="m1 1 10 10M11 1 1 11" /></svg>
          </div>
        </div>
      </div>
      <div className="h-[27px] bg-white flex items-center text-[14px] text-[#1c1c1c]">
        <div className="pl-[10px] w-[52px]">File</div>
        <div className="w-[52px]">Data</div>
        <div className="w-[91px]">Worksheet</div>
        <div className="w-[93px]">Dashboard</div>
        <div className="w-[55px]">Story</div>
        <div className="w-[73px]">Analysis</div>
        <div className="w-[51px]">Map</div>
        <div className="w-[67px]">Format</div>
        <div className="w-[62px]">Server</div>
        <div className="w-[75px]">Window</div>
        <div>Help</div>
      </div>
      <Toolbar />
      <div className="flex-1 flex">
        <div className="w-[32px] border-r border-[#d9d9d9] flex flex-col">
          <div className="h-[36px] bg-[#f8f8f8] border-b border-[#d9d9d9] flex items-center justify-center"><ChevronRight size={16} color="#666666" /></div>
          <div className="h-[131px] bg-[#fafafa] border-b border-[#d9d9d9] flex justify-center items-center pt-[3px]">
            <div className="[writing-mode:vertical-rl] rotate-180 text-[16px] text-[#444444]">Data</div>
          </div>
          <div className="h-[134px] bg-[#fafafa] border-b border-[#d9d9d9] flex justify-center items-center">
            <div className="[writing-mode:vertical-rl] rotate-180 text-[16px] text-[#444444]">Analytics</div>
          </div>
        </div>
        <div className="ml-[7px]">
          <LeftPanels />
        </div>
        <div className="ml-[8px] flex-1 pr-[7px] flex flex-col">
          <div className="flex flex-col gap-[8px]">
            <Shelf label="Columns" icon={<div className="flex gap-[3px]">{[0, 1, 2].map((i) => <div key={i} className="w-[2px] h-[13px] bg-[#666666]" />)}</div>} />
            <Shelf label="Rows" icon={<div className="flex flex-col gap-[2px]">{[0, 1, 2].map((i) => <div key={i} className="w-[14px] h-[2px] bg-[#555555]" />)}</div>} />
          </div>
          <div className="mt-[9px] flex gap-[8px]">
            <div className="w-[1473px] h-[757px] bg-white border-2 border-[#dedede] pl-[15px]">
              <div className="-ml-[15px] h-[61px] text-center font-['Open_Sans',sans-serif] font-bold text-[24px] leading-[58px] text-[#333333] tracking-[-0.3px]">Max Accidents Based on Years</div>
              <Treemap />
            </div>
            <div className="flex-1 h-[87px] bg-[#fafafa] border-2 border-[#dedede] px-[4px]">
              <div className="text-center text-[15px] text-[#444444] mt-[6px] pr-[5px] tracking-[0.1px] leading-[20px] whitespace-nowrap">CNT(airplane_crash.csv)</div>
              <div className="mt-[11px] h-[21px] border-t-2 border-[#a7a59c] border-b border-b-[#a7a59c] bg-gradient-to-r from-[#b8e2d8] via-[#43a0bb] via-55% to-[#2c5986]" />
              <div className="flex justify-between text-[16px] text-[#2f6f99] leading-[20px] mt-[4px]"><span>1</span><span>104</span></div>
            </div>
          </div>
          <div className="flex-1" />
        </div>
      </div>
      <TabBar />
      <StatusBar />
      <Taskbar />
    </div>
  );
}
